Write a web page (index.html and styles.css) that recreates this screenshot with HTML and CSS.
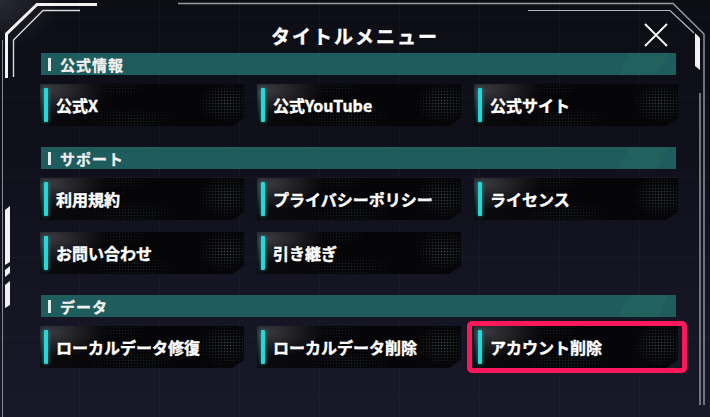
FILE: index.html
```html
<!DOCTYPE html>
<html lang="ja">
<head>
  <meta charset="UTF-8" />
  <meta name="viewport" content="width=device-width, initial-scale=1.0"/>
  <title>タイトルメニュー</title>
  <link rel="stylesheet" href="styles.css">
</head>
<body>

  <div class="screen">
    <!-- frame decoration -->
    <svg class="frame" viewBox="0 0 710 417" width="710" height="417">
      <polyline points="97,4.5 37,4.5 6.5,34 6.5,78" fill="none" stroke="#f2f2f2" stroke-width="3"/>
      <polyline points="80,10.5 43,10.5 13.5,40 13.5,77" fill="none" stroke="#d8d8d8" stroke-width="1.4"/>
      <line x1="2.5" y1="40" x2="2.5" y2="417" stroke="#8a8a94" stroke-width="1"/>
      <polygon points="5,210 10,206 10,262 5,265" fill="#f2f2f2"/>
      <polygon points="5,270 10,266 10,273 5,277" fill="#f2f2f2"/>
      <polygon points="5,285 10,281 10,305 5,308" fill="#f2f2f2"/>
      <polyline points="178,3.5 673,3.5 704,34 704,405" fill="none" stroke="#9a9aa2" stroke-width="1.4"/>
      <polyline points="528,10.5 670,10.5 694,33" fill="none" stroke="#b8b8c0" stroke-width="1.2"/>
      <polygon points="695,33 700,38 700,70 695,66" fill="#f2f2f2"/>
      <line x1="700" y1="93" x2="700" y2="405" stroke="#9a9aa2" stroke-width="1.4"/>
    </svg>

    <header class="title-bar">
      <span></span>
      <h1>タイトルメニュー</h1>
      <button class="close" aria-label="閉じる">
        <svg viewBox="0 0 24 24" width="24" height="24">
          <path d="M1 1 L23 23 M23 1 L1 23" stroke="#fff" stroke-width="1.8" fill="none"/>
        </svg>
      </button>
    </header>

    <main class="menu">
      <section class="group">
        <h2 class="group-title">公式情報</h2>
        <div class="grid">
          <a class="item" href="#">公式X</a>
          <a class="item" href="#">公式YouTube</a>
          <a class="item" href="#">公式サイト</a>
        </div>
      </section>

      <section class="group">
        <h2 class="group-title">サポート</h2>
        <div class="grid">
          <a class="item" href="#">利用規約</a>
          <a class="item" href="#">プライバシーポリシー</a>
          <a class="item" href="#">ライセンス</a>
          <a class="item" href="#">お問い合わせ</a>
          <a class="item" href="#">引き継ぎ</a>
        </div>
      </section>

      <section class="group">
        <h2 class="group-title">データ</h2>
        <div class="grid">
          <a class="item" href="#">ローカルデータ修復</a>
          <a class="item" href="#">ローカルデータ削除</a>
          <div class="focus">
            <a class="item" href="#">アカウント削除</a>
          </div>
        </div>
      </section>
    </main>
  </div>

</body>
</html>
```

FILE: styles.css
```css
body {
  margin: 0;
  padding: 0;
  background-color: #171722;
  font-family: "Noto Sans CJK JP", "Noto Sans", sans-serif;
  color: #fff;
}

.screen {
  position: relative;
  width: 710px;
  height: 417px;
  overflow: hidden;
  background:
    radial-gradient(ellipse 60px 50px at 0 0, rgba(60,60,70,0.6), transparent),
    repeating-linear-gradient(90deg, transparent 0 79px, rgba(255,255,255,0.025) 79px 80px),
    repeating-linear-gradient(0deg, transparent 0 79px, rgba(255,255,255,0.025) 79px 80px),
    linear-gradient(#0d0d16 0, #10101b 35%, #181829 100%);
}

.frame {
  position: absolute;
  top: 0;
  left: 0;
  pointer-events: none;
}

.title-bar {
  display: grid;
  grid-template-columns: 1fr auto 1fr;
  align-items: start;
  height: 53px;
}

h1 {
  margin: 0;
  padding-top: 25px;
  font-size: 19px;
  line-height: 22px;
  font-weight: 700;
  letter-spacing: 2px;
  -webkit-text-stroke: 0.4px #fff;
}

.close {
  justify-self: end;
  margin: 23px 42px 0 0;
  padding: 0;
  border: 0;
  background: none;
  width: 24px;
  height: 24px;
}

.menu {
  padding: 0 34px 0 40px;
}

.group {
  margin-bottom: 21px;
}

.group-title {
  display: flex;
  align-items: center;
  height: 22px;
  margin: 0 0 9px 1px;
  padding-left: 7px;
  font-size: 15px;
  font-weight: 700;
  letter-spacing: 1px;
  color: #f0f0f0;
  -webkit-text-stroke: 0.3px #f0f0f0;
  background: linear-gradient(118deg, #1f5c5d 0 91%, #21625f 91% 97%, #1f5c5d 97%);
}

.group-title::before {
  content: "";
  width: 3px;
  height: 13px;
  margin-right: 9px;
  background: #e8e8e8;
}

.grid {
  display: grid;
  grid-template-columns: repeat(3, 204px);
  column-gap: 13px;
  row-gap: 12px;
}

.item {
  position: relative;
  display: flex;
  align-items: center;
  height: 42px;
  color: #fff;
  text-decoration: none;
  font-size: 16px;
  font-weight: 700;
  -webkit-text-stroke: 0.4px #fff;
  text-shadow: 0 0 2px rgba(0,0,0,0.8);
  background:
    radial-gradient(ellipse 55px 26px at 12px 6px, rgba(140,140,150,0.35), transparent),
    linear-gradient(90deg, #0b0b0e, #050507 40%, #060608);
  clip-path: polygon(0 0, 100% 0, 100% calc(100% - 8px), calc(100% - 12px) 100%, 0 100%);
}

.item::before {
  content: "";
  width: 4px;
  height: 34px;
  margin: 0 8px 0 4px;
  border-radius: 1px;
  background: #27d6d8;
  box-shadow: 0 0 4px rgba(39, 214, 216, 0.7);
}

.item::after {
  content: "";
  position: absolute;
  inset: 0;
  background: radial-gradient(circle, rgba(110,140,135,0.55) 0.7px, transparent 1.1px) 0 0 / 3px 3px;
  -webkit-mask-image:
    radial-gradient(ellipse 28px 22px at 91% 45%, #000, transparent),
    radial-gradient(ellipse 50px 14px at 45% 85%, rgba(0,0,0,0.5), transparent),
    radial-gradient(ellipse 30px 10px at 40% 10%, rgba(0,0,0,0.4), transparent);
  mask-image:
    radial-gradient(ellipse 28px 22px at 91% 45%, #000, transparent),
    radial-gradient(ellipse 50px 14px at 45% 85%, rgba(0,0,0,0.5), transparent),
    radial-gradient(ellipse 30px 10px at 40% 10%, rgba(0,0,0,0.4), transparent);
}

.focus {
  position: relative;
}

.focus::after {
  content: "";
  position: absolute;
  top: -5px;
  right: -9px;
  bottom: -5px;
  left: -7px;
  border: 5px solid #ff175b;
  border-radius: 5px;
  pointer-events: none;
}
```
